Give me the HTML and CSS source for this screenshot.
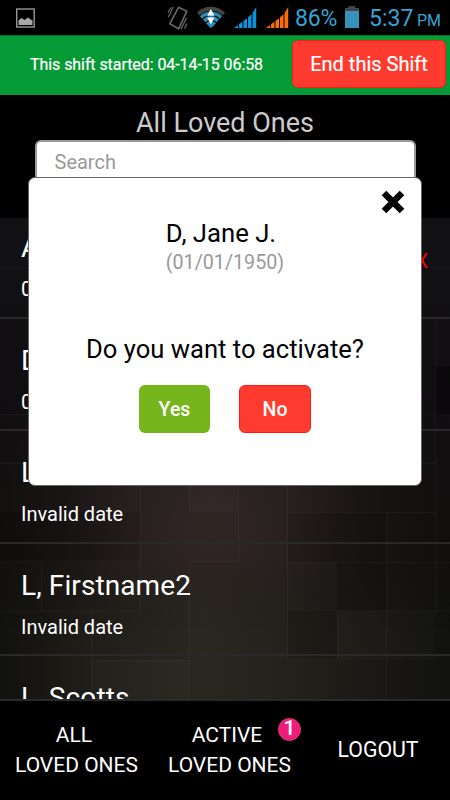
FILE: index.html
```html
<!DOCTYPE html>
<html lang="en">
<head>
<meta charset="utf-8">
<title>All Loved Ones</title>
<link rel="stylesheet" href="styles.css">
</head>
<body>
<div class="screen">
  <div class="status">
    <svg class="status-icons" width="290" height="36" viewBox="0 0 290 36">
      <rect x="16.700" y="9" width="17.500" height="18" fill="none" stroke="#969696" stroke-width="1.400"/>
      <path d="M18.500 25v-4.500l3-2.500 3 2 3.500-2.500 2.500 2 2 1v4.500z" fill="#a8a8a8"/>
      <g fill="none" stroke="#666">
        <path d="M178.500 7.300l8.300 4-8.200 17.500-8.800-5z" stroke-width="1.700" stroke-linejoin="round"/>
        <path d="M168 12.500l3-5M168.300 17l5-10M181 29l5.500-11M184.500 28.500l2.500-5" stroke-width="1.300"/>
      </g>
      <path d="M197 12.500a20 20 0 0 1 28 0l-2.400 3a16.500 16.500 0 0 0-23.200 0z" fill="#444"/>
      <path d="M200 16.200a15.500 15.500 0 0 1 22 0l-2 2.500a13 13 0 0 0-18 0zM203 19.500a11 11 0 0 1 16 0l-2.300 2.800a8.500 8.500 0 0 0-11.400 0zM206 23.200a7 7 0 0 1 10 0l-5 5z" fill="#2b8db5"/>
      <path d="M210.800 9l3.600 6.800h-7.200zM207.200 17.500h7.200l-3.600 7z" fill="#fff"/>
      <g fill="#0b90dc">
        <path d="M234 28l4-3v3zM239 24.200l3.500-2.500V28H239zM243.500 21l3.500-2.700V28h-3.500zM248 17.300l3.500-3.100V28H248zM252.500 13.300l3.700-6.300v21h-3.700z"/>
      </g>
      <g fill="#ff6c0a">
        <path d="M266 28l4-3v3zM271 24.200l3.500-2.500V28H271zM275.500 21l3.500-2.700V28h-3.500zM280 17.300l3.500-3.100V28H280zM284.500 13.300l3.700-6.300v21h-3.700z"/>
      </g>
    </svg>
    <span class="percent">86%</span>
    <svg class="battery" width="14" height="22" viewBox="0 0 15 22" preserveAspectRatio="none"><path d="M0 2h3.500V0h7.500v2h4v3H0z" fill="#444"/><path d="M0 5h15v17H0z" fill="#3593bb"/></svg>
    <span class="clock">5:37</span><span class="meridiem">PM</span>
  </div>

  <header class="shift">
    <span class="shift-text">This shift started: 04-14-15 06:58</span>
    <button class="btn btn-red end">End this Shift</button>
  </header>

  <section class="top">
    <h1>All Loved Ones</h1>
    <div class="search">Search</div>
  </section>

  <main class="list">
    <svg class="tiles" width="450" height="481" viewBox="0 218 450 481">
      <defs>
        <linearGradient id="base" x1="0" y1="0" x2="0" y2="1">
          <stop offset="0" stop-color="#121114"/><stop offset=".4" stop-color="#100e10"/><stop offset=".65" stop-color="#110f0e"/><stop offset="1" stop-color="#10110c"/>
        </linearGradient>
        <radialGradient id="warm" gradientUnits="userSpaceOnUse" cx="212" cy="525" r="240">
          <stop offset="0" stop-color="#302725"/><stop offset=".35" stop-color="#292120" stop-opacity=".95"/><stop offset="1" stop-color="#171312" stop-opacity="0"/>
        </radialGradient>
        <linearGradient id="olive" x1="0" y1="0" x2="1" y2="0">
          <stop offset="0" stop-color="#11110d"/><stop offset=".2" stop-color="#201e19"/><stop offset=".45" stop-color="#2a2720"/><stop offset=".6" stop-color="#26231e"/><stop offset="1" stop-color="#11110d"/>
        </linearGradient>
        <linearGradient id="fade" x1="0" y1="0" x2="0" y2="1">
          <stop offset="0" stop-color="#fff" stop-opacity=".25"/><stop offset=".5" stop-color="#fff"/>
        </linearGradient>
        <mask id="lower"><path d="M0 562h450v137H0z" fill="url(#fade)"/></mask>
      </defs>
      <path d="M0 218h450v481H0z" fill="url(#base)"/>
      <path d="M0 218h450v481H0z" fill="url(#warm)"/>
      <path d="M0 562h450v137H0z" fill="url(#olive)" mask="url(#lower)"/>
      <path d="M0 512h140v50H0zM288 512h98v50h-98zM337 562h49v49h-49zM288 611h49v49h-49z" fill="#000" fill-opacity=".12"/>
      <path d="M435 365h15v49h-15z" fill="#000" fill-opacity=".3"/>
      <path d="M189 486h49v26h-49zM337 611h98v49h-98zM91 660h98v39H91z" fill="#fff" fill-opacity=".015"/>
      <g fill="none" stroke="#fff" stroke-opacity=".04">
        <path d="M140.500 486v125M0 561.500h140M189.500 486v26M189.500 699V561.500h49V486M287.500 486v174M41.500 561v50M91.500 611v88M386.500 512v187M435.500 318v96h-14M435.500 414v197M421 463.500h14M288 512.500h147M288 562.500h162M0 611.500h140M337.500 660v-49H450M91 660.500h98M288 659.500h49M0 414.500h29M0 463.500h29M422 267.500h28M435 365.500h15M0 267.500h29"/>
      </g>
    </svg>
    <div class="rows">
      <article class="row"><span class="name">A, Firstname</span><span class="date">01/01/1950</span><span class="mark">X</span></article>
      <article class="row"><span class="name">D, Jane J.</span><span class="date">01/01/1950</span></article>
      <article class="row"><span class="name">L, Firstname</span><span class="date">Invalid date</span></article>
      <article class="row"><span class="name">L, Firstname2</span><span class="date">Invalid date</span></article>
      <article class="row"><span class="name">L, Scotts</span><span class="date">Invalid date</span></article>
    </div>
  </main>

  <nav class="tabs">
    <span class="tab"><span class="first">ALL</span><span>LOVED ONES</span></span>
    <span class="tab"><span class="first">ACTIVE</span><span>LOVED ONES</span><b class="badge">1</b></span>
    <span class="tab logout">LOGOUT</span>
  </nav>

  <div class="dialog">
    <svg class="close" width="24" height="24" viewBox="0 0 24 24"><path d="M3 3l18 18M21 3l-18 18" stroke="#000" stroke-width="6.500"/></svg>
    <div class="person"><span class="who">D, Jane J.</span><span class="dob">(01/01/1950)</span></div>
    <p class="question">Do you want to activate?</p>
    <div class="actions"><button class="btn yes">Yes</button><button class="btn btn-red no">No</button></div>
  </div>
</div>
</body>
</html>
```

FILE: styles.css
```css
* { box-sizing: border-box; }
body { margin: 0; background: #000; font-family: Roboto, "Liberation Sans", sans-serif; }
.screen { position: relative; width: 450px; height: 800px; overflow: hidden; display: flex; flex-direction: column; background: #000; color: #fff; }
.status { height: 35px; flex: none; display: flex; align-items: flex-start; color: #36a3d4; white-space: nowrap; }
.status-icons { flex: none; }
.percent { width: 54px; padding-left: 5px; font-size: 23px; line-height: 38px; letter-spacing: -.2px; }
.battery { flex: none; margin: 6px 0 0 1px; }
.clock { width: 48px; margin-left: 10px; font-size: 23px; line-height: 38px; }
.meridiem { font-size: 16px; line-height: 42px; }
.shift { height: 60px; flex: none; display: flex; align-items: center; background: #049a35; padding-left: 30px; border-top: 1px solid #05702a; }
.shift-text { width: 262px; margin-top: -2px; font-size: 16px; letter-spacing: -.07px; white-space: nowrap; -webkit-text-stroke: .2px; }
.btn { border: 0; padding: 0; color: #fff; font-family: inherit; font-weight: 500; border-radius: 6px; white-space: nowrap; }
.btn-red { background: #ff3b30; border: 1px solid #ff1a12; }
.end { width: 154px; height: 48px; font-size: 20px; font-weight: 400; margin: -4px 0 0 0; -webkit-text-stroke: .2px; }
.top { height: 123px; flex: none; display: flex; flex-direction: column; align-items: center; }
h1 { margin: 9px 0 0; height: 36px; font-size: 27px; line-height: 38px; font-weight: 400; color: #ccc; }
.search { width: 381px; height: 46px; border: 2px solid #999; border-radius: 6px; background: #fff; color: #999; font-size: 20px; line-height: 40px; padding-left: 18px; }
.list { position: relative; height: 481px; flex: none; overflow: hidden; }
.tiles { position: absolute; left: 0; top: 0; }
.rows { position: relative; margin-top: -12px; }
.row { position: relative; height: 112.500px; border-bottom: 2px solid #292929; padding: 24px 21px 0; display: flex; flex-direction: column; }
.name { font-size: 28px; line-height: 36px; letter-spacing: .1px; }
.date { font-size: 20px; line-height: 30px; margin-top: 8px; }
.mark { position: absolute; right: 22px; top: 43px; color: #f00; font-size: 20px; line-height: 24px; }
.tabs { height: 101px; flex: none; border-top: 2px solid #292929; background: #000; display: flex; align-items: center; font-size: 21px; line-height: 30px; text-align: center; white-space: nowrap; padding-bottom: 1px; }
.tab { position: relative; width: 153px; display: flex; flex-direction: column; }
.first { padding-right: 5px; }
.logout { width: 144px; font-size: 21.300px; }
.badge { position: absolute; left: 125px; top: -2px; width: 23px; height: 23px; border-radius: 50%; background: #ee1c7c; border: 1px solid #df3b64; font-size: 21px; line-height: 18px; font-weight: 500; }
.dialog { position: absolute; left: 28px; top: 177px; width: 394px; height: 309px; background: #fff; border: 1.500px solid #666; border-radius: 7px; color: #000; display: flex; flex-direction: column; align-items: center; }
.close { position: absolute; right: 16px; top: 12px; }
.person { display: flex; flex-direction: column; margin-top: 38px; }
.who { font-size: 25.700px; line-height: 34px; }
.dob { font-size: 19.700px; line-height: 26px; color: #999; }
.question { margin: 55px 0 0; font-size: 25.600px; line-height: 36px; height: 36px; }
.actions { display: flex; gap: 29px; margin-top: 18px; }
.yes, .no { width: 71px; height: 48px; font-size: 19.500px; }
.no { width: 72px; }
.yes { background: #76b51b; }
```
